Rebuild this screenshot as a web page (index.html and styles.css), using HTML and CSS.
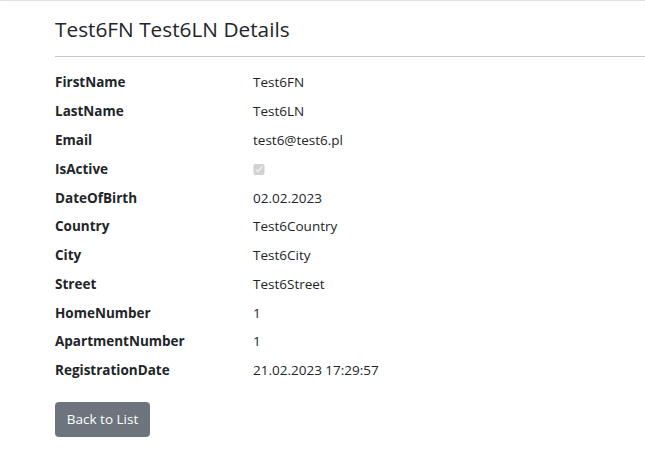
FILE: index.html
```html
<!DOCTYPE html>
<html lang="en">
<head>
<meta charset="utf-8">
<title>Details</title>
<link rel="stylesheet" href="styles.css">
</head>
<body>
<div class="nav-edge"></div>
<main class="page">
  <h4 class="title">Test6FN Test6LN Details</h4>
  <hr class="rule">
  <dl class="details">
    <dt>FirstName</dt><dd>Test6FN</dd>
    <dt>LastName</dt><dd>Test6LN</dd>
    <dt>Email</dt><dd>test6@test6.pl</dd>
    <dt>IsActive</dt><dd><input class="check" type="checkbox" checked disabled></dd>
    <dt>DateOfBirth</dt><dd>02.02.2023</dd>
    <dt>Country</dt><dd>Test6Country</dd>
    <dt>City</dt><dd>Test6City</dd>
    <dt>Street</dt><dd>Test6Street</dd>
    <dt>HomeNumber</dt><dd>1</dd>
    <dt>ApartmentNumber</dt><dd>1</dd>
    <dt>RegistrationDate</dt><dd>21.02.2023 17:29:57</dd>
  </dl>
  <div class="actions">
    <a class="btn" href="#">Back to List</a>
  </div>
</main>
</body>
</html>
```
FILE: styles.css
```css
html, body {
  margin: 0;
  padding: 0;
  background: #fff;
}
body {
  font-family: "Open Sans", "Noto Sans", sans-serif;
  font-size: 13.5px;
  line-height: 21.6px;
  color: #212529;
}
.nav-edge {
  height: 1px;
  background: #dde1e7;
  box-shadow: 0 3px 10px rgba(0, 0, 0, 0.06);
}
.page {
  padding: 0 0 0 55px;
}
.title {
  margin: 14.6px 0 7.2px;
  font-size: 20.8px;
  font-weight: 500;
  line-height: 26px;
  color: #212529;
}
.rule {
  margin: 14.4px 0;
  border: 0;
  border-top: 1px solid #c8c9ca;
  height: 0;
}
.details {
  display: grid;
  grid-template-columns: 198px 1fr;
  margin: 0 0 13.4px;
  padding-top: 1px;
}
.details dt {
  font-weight: 700;
  margin: 0 0 7.2px;
}
.details dd {
  margin: 0 0 7.2px;
  display: flex;
  align-items: center;
}
.check {
  margin: 0;
  width: 11.7px;
  height: 11.7px;
}
.btn {
  display: inline-block;
  padding: 5.4px 10.8px;
  border: 0.9px solid #6c757d;
  border-radius: 3.4px;
  background: #6c757d;
  color: #fff;
  text-decoration: none;
  font-size: 13.5px;
  line-height: 21.6px;
}
```
